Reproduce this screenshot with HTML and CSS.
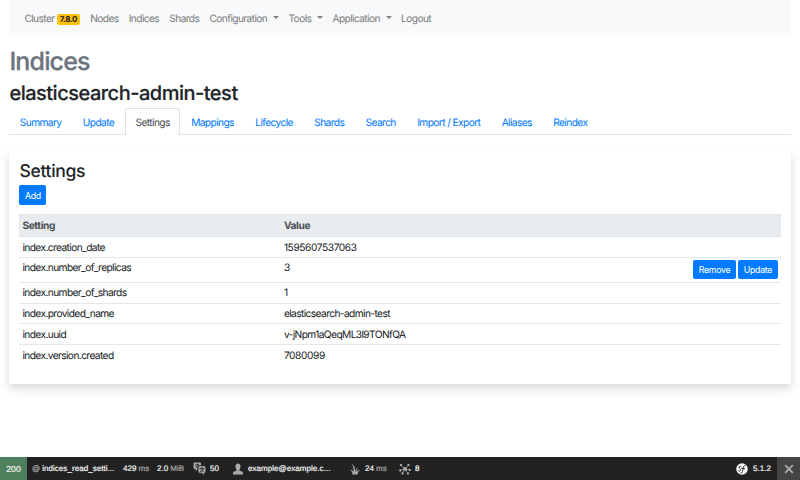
FILE: index.html
```
<!DOCTYPE html>
<html lang="en">
<head>
<meta charset="utf-8">
<title>Indices - elasticsearch-admin-test - Settings</title>
<link rel="stylesheet" href="styles.css">
</head>
<body>
<div class="container">
  <nav class="navbar">
    <a>Cluster <span class="badge">7.8.0</span></a>
    <a>Nodes</a>
    <a>Indices</a>
    <a>Shards</a>
    <a class="dropdown">Configuration</a>
    <a class="dropdown">Tools</a>
    <a class="dropdown">Application</a>
    <a>Logout</a>
  </nav>
  <h1>Indices</h1>
  <h2>elasticsearch-admin-test</h2>
  <div class="tabs">
    <a>Summary</a><a>Update</a><a class="active">Settings</a><a>Mappings</a><a>Lifecycle</a><a>Shards</a><a>Search</a><a>Import / Export</a><a>Aliases</a><a>Reindex</a>
  </div>
  <main class="card">
    <h3>Settings</h3>
    <button class="btn">Add</button>
    <div class="table">
      <div class="row head"><span>Setting</span><span>Value</span></div>
      <div class="row"><span>index.creation_date</span><span class="number">1595607537063</span></div>
      <div class="row tall"><span>index.number_of_replicas</span><span class="number">3</span><span class="actions"><button class="btn">Remove</button><button class="btn">Update</button></span></div>
      <div class="row"><span>index.number_of_shards</span><span class="number">1</span></div>
      <div class="row"><span>index.provided_name</span><span>elasticsearch-admin-test</span></div>
      <div class="row"><span>index.uuid</span><span>v-jNpm1aQeqML3l9TONfQA</span></div>
      <div class="row"><span>index.version.created</span><span class="number">7080099</span></div>
    </div>
  </main>
</div>
<footer class="toolbar">
  <div class="status">200</div>
  <div class="route"><i>@</i> indices_read_setti...</div>
  <div class="time">429 <i>ms</i></div>
  <div class="memory">2.0 <i>MiB</i></div>
  <div class="translation">
    <svg width="13" height="13" viewBox="0 0 24 24"><path fill="#aaa" d="M2 1h11q2 0 2 2v3h-3q-4 0-4 4v4l-3 3v-4H3q-2 0-2-2V3q0-2 1-2z"/><path d="M8 3v3M4 5h7M5 10q4-1 5-5M5 7l4 3" stroke="#222" fill="none" stroke-width="1.3"/><path fill="#aaa" d="M12 8h9q2 0 2 2v8q0 2-2 2h-1v4l-4-4h-4q-2 0-2-2v-8q0-2 2-2z"/><path d="M12 12h9M16.500 10v2M13 18q5-1 6-6M14 14l6 4" stroke="#222" fill="none" stroke-width="1.500"/></svg>50</div>
  <div class="user">
    <svg width="10" height="12" viewBox="0 0 20 24"><path fill="#aaa" d="M10 1c3 0 5 2 5 5 0 4-1 6-2.500 8v1l5.500 2q2 1 2 3v3H0v-3q0-2 2-3l5.500-2v-1C6 12 5 10 5 6c0-3 2-5 5-5z"/></svg>example@example.c...</div>
  <div class="twig">
    <svg width="10" height="12" viewBox="0 0 20 24"><path fill="#aaa" d="M5 23q0-6-5-10 5 0 7 5Q8 8 3 1q8 5 7 16 2-6 6-8-3 4-3 9 2-4 7-4-5 3-5 9z"/></svg><span>24<i>ms</i></span></div>
  <div class="http">
    <svg width="12" height="12" viewBox="0 0 24 24"><path d="M4 5l8 7 7-8M2 15l10-3 10 2M7 21l5-9 6 9" stroke="#aaa" fill="none" stroke-width="1.500"/><g fill="#aaa"><circle cx="12" cy="12" r="4"/><circle cx="4" cy="4" r="2.300"/><circle cx="19" cy="4" r="2.300"/><circle cx="2.500" cy="15" r="2.300"/><circle cx="21.500" cy="14" r="2.300"/><circle cx="7" cy="21" r="2.300"/><circle cx="18" cy="21" r="2.300"/></g></svg>8</div>
  <div class="symfony">
    <svg width="12" height="12" viewBox="0 0 24 24"><circle cx="12" cy="12" r="11.500" fill="#fff"/><path d="M11 8q-3-2-5 0c-2 3 4 3 3 6-1 3-4 3-5 1M19 6q-3-3-4 2l-2 9q-1 4-4 3M11 11h7" fill="none" stroke="#222" stroke-width="1.800"/></svg>5.1.2</div>
  <div class="close"><svg width="10" height="10" viewBox="0 0 10 10"><path d="M1.200 1.200l7.600 7.600M8.800 1.200L1.200 8.800" stroke="#aaa" stroke-width="1.800"/></svg></div>
</footer>
</body>
</html>
```
FILE: styles.css
```
* { box-sizing: border-box; }
body {
  margin: 0;
  height: 480px;
  overflow: hidden;
  display: flex;
  flex-direction: column;
  background: #fff;
  color: #212529;
  font: 10.200px/15px Inter, "Liberation Sans", sans-serif;
  letter-spacing: -0.6px;
  text-rendering: geometricPrecision;
  -webkit-text-stroke: .05px;
}
.container { flex: 1; padding: 0 9.4px; }
.navbar {
  height: 35px;
  padding: 3px 15px 0;
  display: flex;
  align-items: center;
  gap: 10.200px;
  background: #f8f9fa;
  color: #808181;
}
.badge {
  display: inline-block;
  height: 11.500px;
  padding: 0 3px;
  border-radius: 2.5px;
  background: #ffc107;
  color: #212529;
  font-size: 8px;
  font-weight: 700;
  line-height: 11.500px;
  vertical-align: 0;
  letter-spacing: -0.35px;
}
.dropdown { margin-right: -0.8px; }
.dropdown::after {
  content: "";
  display: inline-block;
  margin-left: 5.800px;
  vertical-align: 3px;
  border: 3px solid transparent;
  border-top-color: #808181;
  border-bottom: 0;
}
h1, h2, h3 { margin: 0; font-weight: 500; }
h1 { margin-top: 11.600px; font-size: 25px; line-height: 30px; color: #6c757d; letter-spacing: -0.85px; -webkit-text-stroke: .3px; }
h2 { margin-top: 4.400px; font-size: 20px; line-height: 24px; letter-spacing: -0.5px; -webkit-text-stroke: .2px; }
.tabs {
  height: 27px;
  margin-top: 3px;
  display: flex;
  border-bottom: 1px solid #dee2e6;
  color: #007bff;
}
.tabs a { height: 27px; padding: 7px 9.700px 0; border: 1px solid transparent; border-bottom: 0; line-height: 15px; }
.tabs a:first-child { padding-left: 9.400px; }
.tabs .active { background: #fff; border-color: #dee2e6; border-radius: 2.5px 2.5px 0 0; color: #495057; }
.card {
  height: 234px;
  margin-top: 15px;
  padding: 12px 10px 0;
  border-radius: 2px;
  box-shadow: 0 5px 10px rgba(0, 0, 0, .15);
}
h3 { padding-top: 1px; font-size: 17.500px; line-height: 18px; height: 18px; letter-spacing: -0.3px; }
.btn {
  display: block;
  height: 19.500px;
  padding: 1px 5.500px 0;
  border: 0;
  border-radius: 2px;
  background: #007bff;
  color: #fff;
  font: 8.750px/18px Inter, sans-serif;
  letter-spacing: -0.28px;
}
.card > .btn { margin-top: 5.500px; }
.table { margin-top: 9.500px; }
.row {
  display: grid;
  grid-template-columns: 261.500px 300px 1fr;
  height: 20.700px;
  padding: 3.600px 3px 0;
  border-top: 1px solid #e4e7ea;
}
.head { height: 21.700px; padding-top: 4px; background: #e9ecef; color: #495057; font-weight: 700; letter-spacing: -0.38px; }
.head + .row { border-top-color: #dee2e6; }
.number { letter-spacing: -0.42px; }
.tall { height: 25px; }
.actions { display: flex; justify-content: flex-end; gap: 2.500px; margin-top: -1.6px; }
.toolbar {
  height: 23px;
  display: flex;
  align-items: center;
  background: #222;
  color: #f5f5f5;
  font: 8px/22px "Liberation Sans", Arial, sans-serif;
  letter-spacing: 0.05px;
  white-space: nowrap;
  -webkit-text-stroke: .2px;
}
.toolbar div { display: flex; align-items: center; height: 23px; flex: none; }
.toolbar i { font-style: normal; color: #aaa; margin: 0 2px; }
.toolbar .status { width: 27px; justify-content: center; background: #4f805d; font-size: 8.700px; }
.route { width: 96px; padding-left: 3px; }
.time { width: 34px; }
.memory { width: 36px; }
.translation { width: 40px; gap: 4px; }
.user { width: 117px; gap: 5px; }
.twig { width: 49px; gap: 5px; }
.http { gap: 4px; }
.symfony { margin-left: auto; gap: 5px; padding-right: 6px; }
.toolbar .close { width: 23px; justify-content: center; background: #444; }
```
